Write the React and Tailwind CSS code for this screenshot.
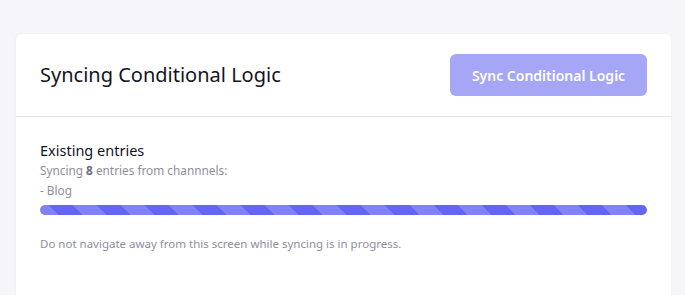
export default function App() {
  return (
    <div className="min-h-[295px] bg-[#f5f5fa] pt-[34px] pl-4 pr-[14px] pb-4" style={{ fontFamily: '"Noto Sans", "Open Sans", sans-serif' }}>
      <div className="rounded-md bg-white shadow-[0_0_3px_rgba(0,0,0,0.05)]">
        <div className="flex items-center justify-between border-b border-[#e3e3ea] px-6 py-5">
          <h1 className="text-[20px] leading-[30px] font-normal text-[#14141f]">Syncing Conditional Logic</h1>
          <button className="h-[42px] w-[197px] rounded-md bg-[#a5a6f6] text-[14px] font-semibold text-white">
            Sync Conditional Logic
          </button>
        </div>
        <div className="px-6 pt-[23px] pb-[64px]">
          <h2 className="text-[14.5px] leading-[20px] text-[#14141f]">Existing entries</h2>
          <p className="text-[11.8px] leading-[20px] text-[#8e8ea0]">
            Syncing <span className="font-bold text-[#6b6b80]">8</span> entries from channnels:
          </p>
          <p className="text-[11.8px] leading-[20px] text-[#8e8ea0]">- Blog</p>
          <div className="mt-[5px] h-[10px] w-full rounded-full bg-[repeating-linear-gradient(45deg,#8183f4_0_13px,#6366f1_13px_30px,#8183f4_30px_34px)]"></div>
          <p className="mt-[19px] text-[11.5px] leading-[19px] text-[#8e8ea0]">
            Do not navigate away from this screen while syncing is in progress.
          </p>
        </div>
      </div>
    </div>
  );
}
